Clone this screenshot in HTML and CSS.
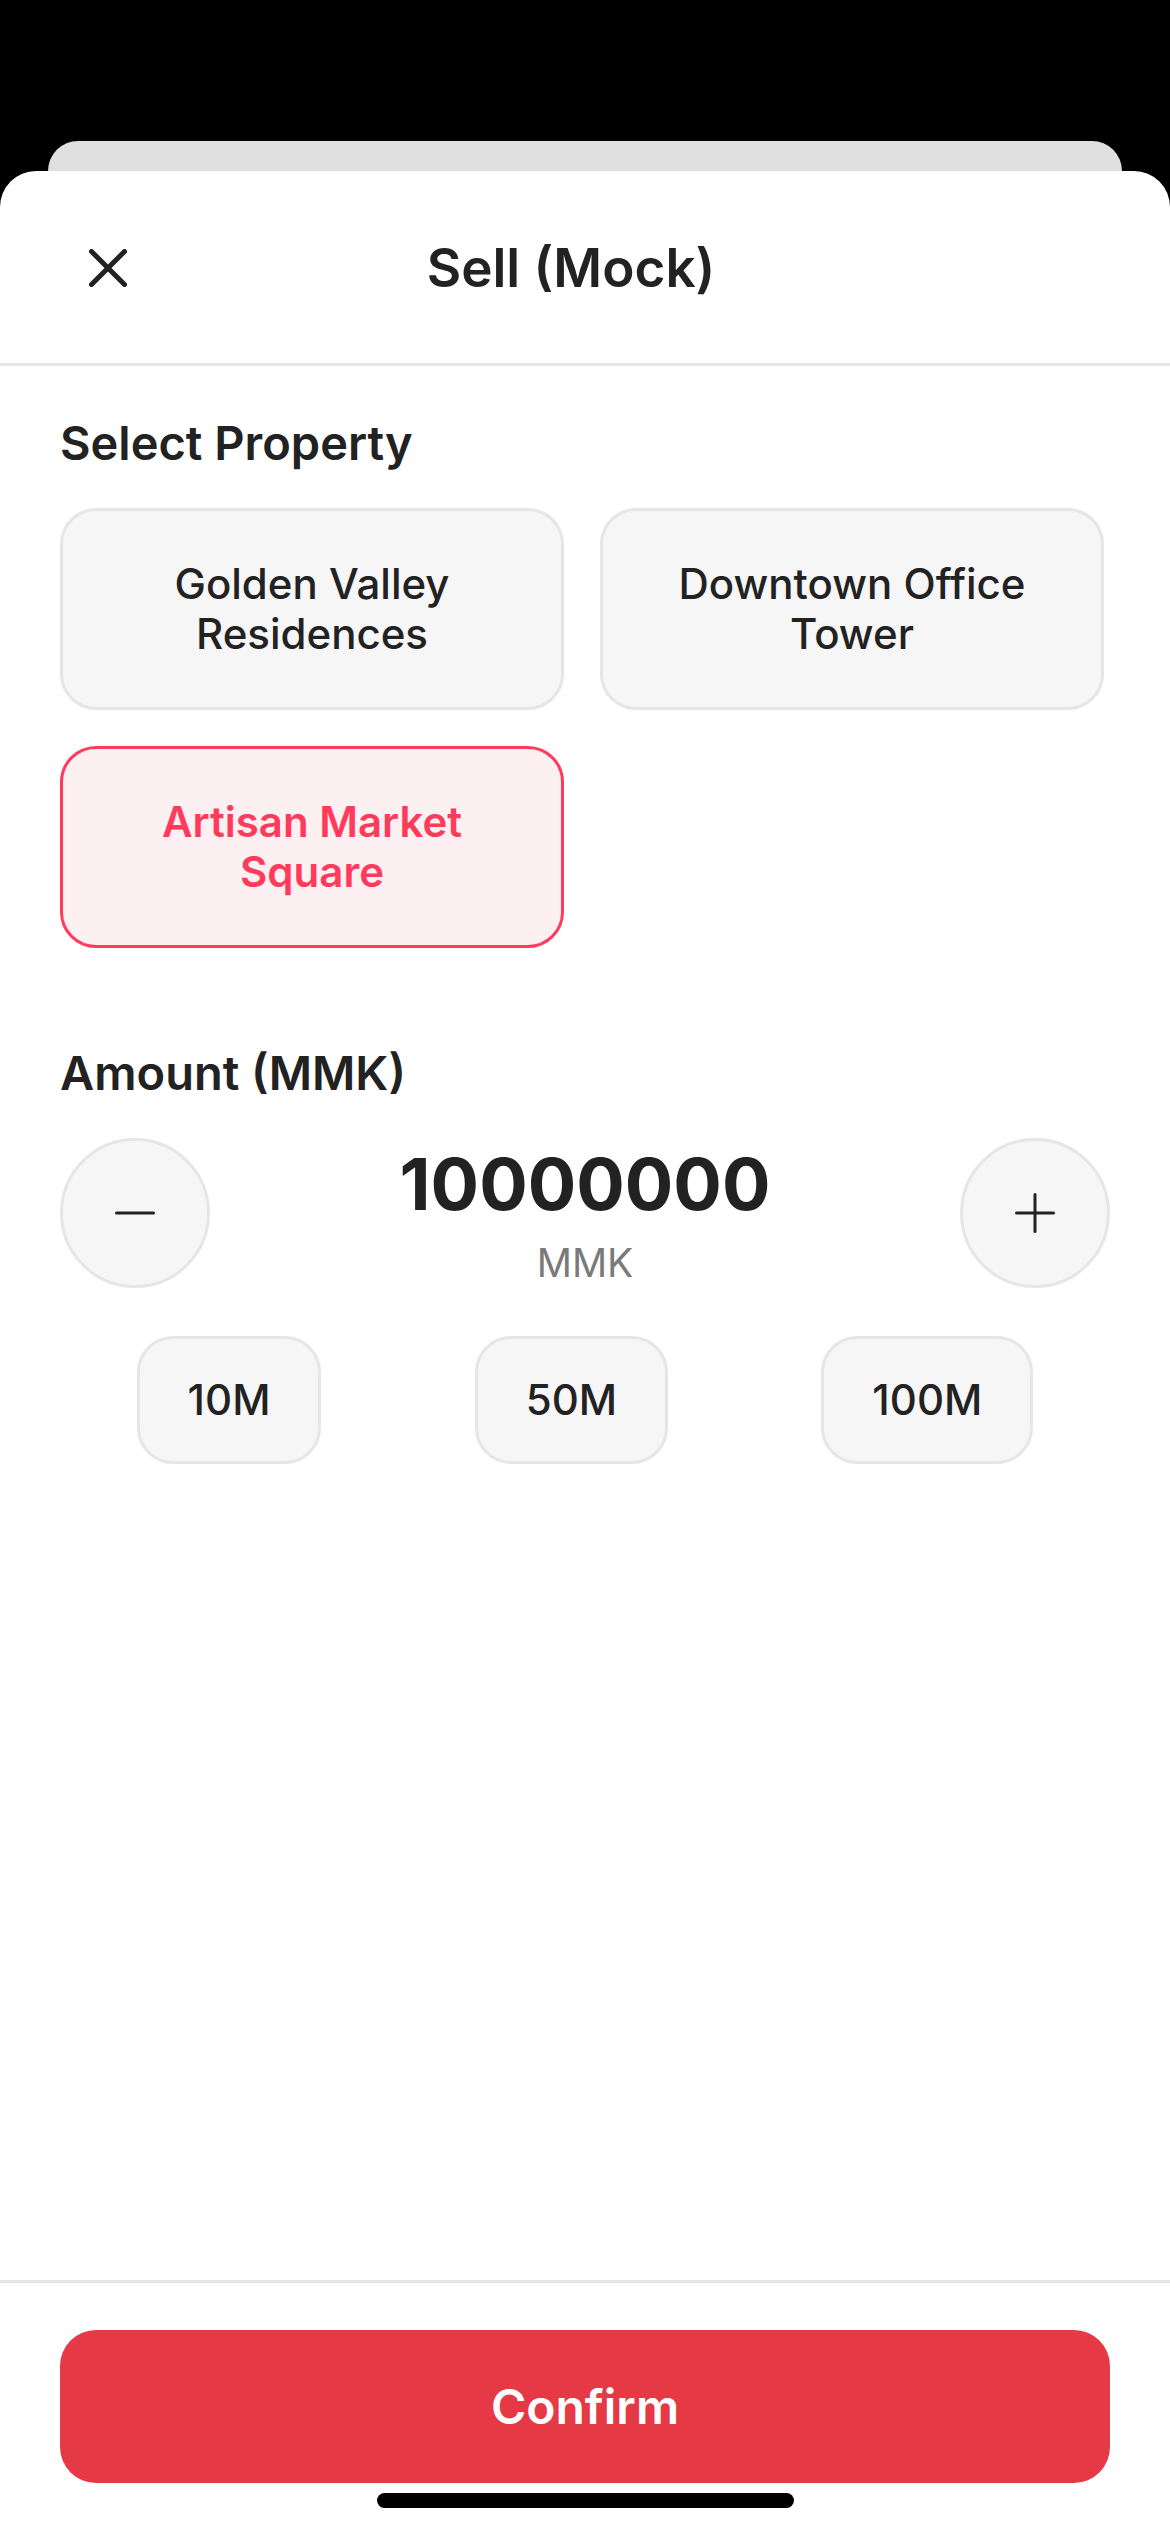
FILE: index.html
```html
<!DOCTYPE html>
<html lang="en">
<head>
<meta charset="utf-8">
<title>Sell (Mock)</title>
<link rel="stylesheet" href="styles.css">
</head>
<body>
  <div class="backdrop-gap"></div>
  <div class="stack-card"></div>
  <div class="sheet">
    <header class="header">
      <button class="close-btn" aria-label="Close">
        <svg width="38" height="38" viewBox="0 0 38 38"><path d="M2.5 2.5 L35.5 35.5 M35.5 2.5 L2.5 35.5" stroke="#222" stroke-width="5" stroke-linecap="round" fill="none"/></svg>
      </button>
      <h1 class="title">Sell (Mock)</h1>
      <span class="header-spacer"></span>
    </header>

    <main class="content">
      <h2 class="section-title">Select Property</h2>
      <div class="cards">
        <div class="card">Golden Valley Residences</div>
        <div class="card">Downtown Office Tower</div>
        <div class="card card-selected">Artisan Market Square</div>
      </div>

      <h2 class="section-title amount-title">Amount (MMK)</h2>
      <div class="stepper">
        <button class="circle-btn" aria-label="Decrease">
          <svg width="40" height="40" viewBox="0 0 40 40"><path d="M1.5 20 H38.5" stroke="#222" stroke-width="3" stroke-linecap="round" fill="none"/></svg>
        </button>
        <div class="amount">
          <div class="amount-value">10000000</div>
          <div class="amount-unit">MMK</div>
        </div>
        <button class="circle-btn" aria-label="Increase">
          <svg width="40" height="40" viewBox="0 0 40 40"><path d="M1.5 20 H38.5 M20 1.5 V38.5" stroke="#222" stroke-width="3" stroke-linecap="round" fill="none"/></svg>
        </button>
      </div>

      <div class="chips">
        <button class="chip">10M</button>
        <button class="chip">50M</button>
        <button class="chip">100M</button>
      </div>
    </main>

    <footer class="footer">
      <button class="confirm">Confirm</button>
    </footer>
    <div class="home-indicator"></div>
  </div>
</body>
</html>
```

FILE: styles.css
```css
* {
  box-sizing: border-box;
}

html, body {
  margin: 0;
  padding: 0;
}

body {
  width: 1170px;
  height: 2532px;
  background: #000;
  display: flex;
  flex-direction: column;
  overflow: hidden;
  font-family: Inter, "Noto Sans", "Liberation Sans", sans-serif;
  color: #222;
}

button {
  font-family: inherit;
  cursor: pointer;
}

.backdrop-gap {
  height: 141px;
  flex: none;
}

.stack-card {
  flex: none;
  height: 30px;
  margin: 0 48px;
  background: #e0e0e0;
  border-radius: 30px 30px 0 0;
}

.sheet {
  flex: 1;
  position: relative;
  display: flex;
  flex-direction: column;
  background: #fff;
  border-radius: 36px 36px 0 0;
}

.header {
  height: 195px;
  flex: none;
  display: grid;
  grid-template-columns: 124px 1fr 152px;
  align-items: center;
  padding: 2px 60px 0;
  border-bottom: 3px solid #e6e6e6;
}

.close-btn {
  width: 38px;
  height: 38px;
  padding: 0;
  margin-left: 29px;
  border: 0;
  background: none;
  display: flex;
}

.title {
  margin: 0;
  text-align: center;
  font-size: 53px;
  line-height: 64px;
  font-weight: 600;
  color: #222;
}

.content {
  flex: 1;
  padding: 48px 60px 0;
}

.section-title {
  margin: 0;
  font-size: 47px;
  line-height: 58px;
  font-weight: 600;
  color: #222;
}

.amount-title {
  margin-top: 96px;
}

.cards {
  margin-top: 36px;
  display: flex;
  flex-wrap: wrap;
  gap: 36px;
}

.card {
  width: 48%;
  padding: 48px 24px;
  border: 3px solid #e6e6e6;
  border-radius: 36px;
  background: #f6f6f6;
  text-align: center;
  font-size: 42px;
  line-height: 50px;
  font-weight: 500;
  color: #222;
}

.card-selected {
  border-color: #ff3b5c;
  background: #fdf0f3;
  color: #ff3b5c;
  font-weight: 600;
}

.stepper {
  margin-top: 36px;
  display: flex;
  align-items: center;
  justify-content: space-between;
}

.circle-btn {
  width: 150px;
  height: 150px;
  flex: none;
  padding: 0;
  border: 3px solid #e6e6e6;
  border-radius: 50%;
  background: #f6f6f6;
  display: flex;
  align-items: center;
  justify-content: center;
}

.amount {
  flex: 1;
  display: flex;
  flex-direction: column;
  align-items: center;
}

.amount-value {
  font-size: 72px;
  line-height: 86px;
  font-weight: 700;
  color: #222;
}

.amount-unit {
  margin-top: 12px;
  font-size: 39px;
  line-height: 47px;
  font-weight: 400;
  color: #7a7a7a;
}

.chips {
  margin-top: 48px;
  display: flex;
  justify-content: space-around;
}

.chip {
  padding: 36px 48px;
  border: 3px solid #e6e6e6;
  border-radius: 36px;
  background: #f6f6f6;
  font-size: 42px;
  line-height: 50px;
  font-weight: 500;
  color: #222;
}

.footer {
  flex: none;
  border-top: 3px solid #e6e6e6;
  padding: 47px 60px 49px;
}

.confirm {
  width: 100%;
  height: 153px;
  border: 0;
  border-radius: 36px;
  background: #e63946;
  color: #fff;
  font-size: 48px;
  font-weight: 600;
}

.home-indicator {
  position: absolute;
  left: 377px;
  bottom: 24px;
  width: 417px;
  height: 15px;
  border-radius: 8px;
  background: #000;
}
```
